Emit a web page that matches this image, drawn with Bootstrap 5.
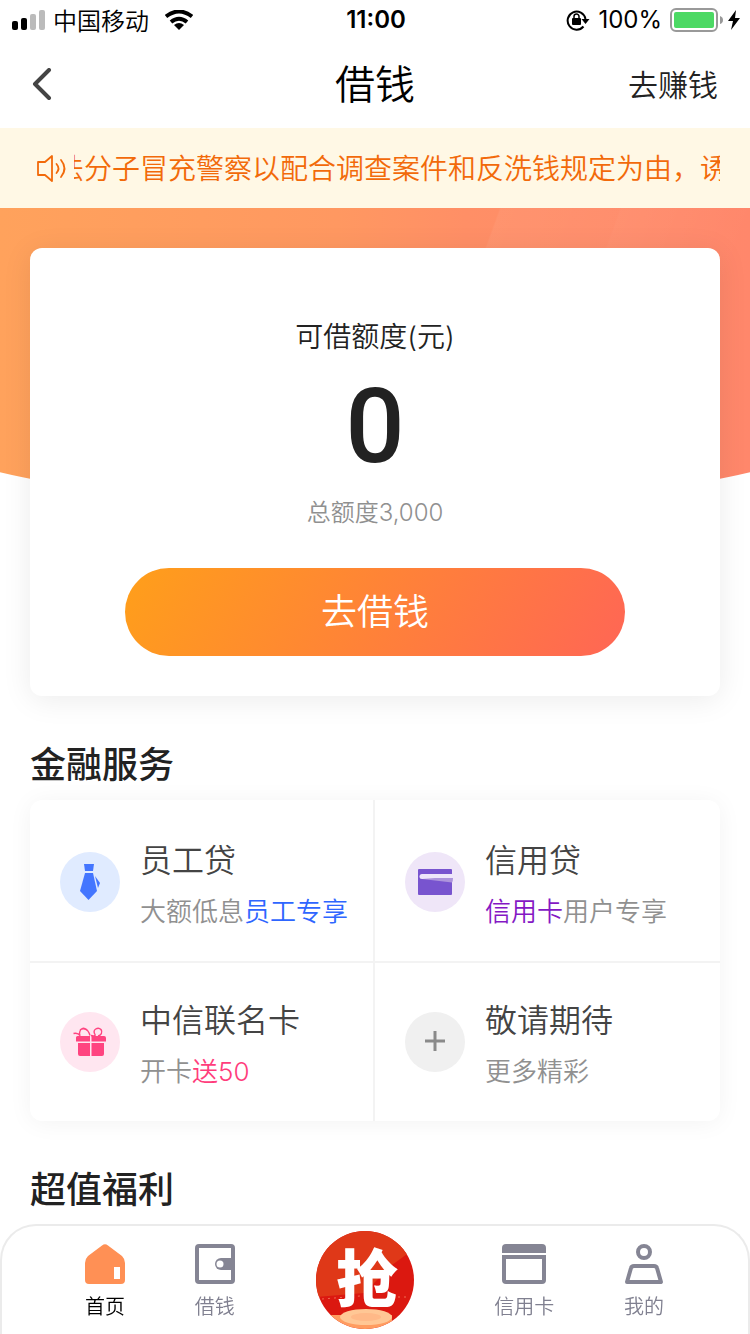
<!DOCTYPE html>
<html lang="zh-CN">
<head>
<meta charset="utf-8">
<meta name="viewport" content="width=device-width, initial-scale=1">
<title>借钱</title>
<link href="https://cdn.jsdelivr.net/npm/bootstrap@5.3.0/dist/css/bootstrap.min.css" rel="stylesheet">
<style>
  body { font-family: Inter, "Noto Sans CJK SC", sans-serif; font-weight: 350; color: #222; background: #fff; }
  a { color: inherit; text-decoration: none; }
  svg { display: block; flex: none; }
  .side { flex: 1 1 0; }
  .status-bar { height: 40px; padding: 0 10px 0 12px; font-size: 24px; line-height: 40px; color: #000; }
  .clock { font-weight: 600; }
  .app-bar { height: 88px; padding: 2px 32px 0; }
  .app-title { font-size: 40px; line-height: 48px; font-weight: 350; color: #000; }
  .app-link { font-size: 30px; line-height: 40px; }
  .notice { height: 80px; padding: 2px 30px 0 36px; background: #fff8e5; color: #f26a0a; }
  .ticker { font-size: 28px; line-height: 40px; text-indent: -18px; }
  .page { padding: 0 30px 112px; }
  .hero { padding-top: 40px; }
  .hero::before {
    content: ""; position: absolute; z-index: -1; top: 0; left: -30px; right: -30px; height: 305px;
    clip-path: ellipse(100% 100% at 50% 0);
    background:
      linear-gradient(110deg, transparent 58%, rgba(255,255,255,.05) 58.2%, rgba(255,255,255,.03) 72%, rgba(255,255,255,.05) 72.2%, transparent 88%),
      linear-gradient(90deg, #ffa25c, #ff9861 45%, #ff8f66 62%, #ff876b);
  }
  .panel { background: #fff; border-radius: 12px; box-shadow: 0 4px 30px rgba(0,0,0,.08); }
  .quota { padding: 69px 30px 40px; }
  .quota-label { font-size: 28px; line-height: 40px; }
  .quota-value { font-family: Roboto, sans-serif; font-size: 104px; line-height: 100px; font-weight: 500; margin: 20px 0; }
  .quota-total { font-size: 24px; line-height: 32px; color: #909090; margin-bottom: 39px; }
  .borrow { max-width: 500px; height: 88px; font-size: 36px; font-weight: 350; color: #fff; border: 0; background: linear-gradient(120deg, #ff9f1a, #ff6655); }
  .section-title { font-size: 36px; line-height: 48px; font-weight: 500; margin: 45px 0 11px; }
  .services { box-shadow: 0 2px 24px rgba(0,0,0,.05); }
  .service { padding: 29px 0 29px 30px; gap: 20px; }
  .service:nth-child(-n+2) { padding-top: 32px; }
  .service:nth-child(odd) { border-right: 2px solid #f3f3f3; }
  .service:nth-child(n+3) { border-top: 2px solid #f3f3f3; }
  .service-text { padding-top: 5px; }
  .service-name { font-size: 32px; line-height: 48px; color: #444; margin-bottom: 7px; }
  .service-note { font-size: 26px; line-height: 40px; color: #909090; }
  .c-blue { color: #2e66ff; } .c-purple { color: #8418c4; } .c-pink { color: #ff3d7c; }
  .tab-bar { height: 110px; padding: 0 84px 0 83px; background: #fff; border: 2px solid #ebebeb; border-bottom: 0; border-radius: 36px 36px 0 0; }
  .tab { padding-top: 18px; gap: 9px; font-size: 20px; line-height: 28px; color: #808090; }
  .tab.active { color: #000; }
  .tab-grab { margin: 5px 11px 0; }
  .grab-word { font: 900 62px "Noto Sans CJK SC", sans-serif; }
</style>
</head>
<body>
<div class="status-bar d-flex align-items-center">
  <div class="side d-flex align-items-center">
    <svg width="33" height="22" viewBox="0 0 33 22"><rect y="12" width="6" height="9" rx="2"/><rect x="9" y="9" width="6" height="12" rx="2"/><g fill="#bbb"><rect x="18" y="5" width="6" height="16" rx="2"/><rect x="27" y="1" width="6" height="20" rx="2"/></g></svg>
    <span class="ms-2 pt-1">中国移动</span>
    <svg class="ms-3" width="28" height="20" viewBox="0 0 28 20"><g fill="none" stroke="#000" stroke-width="4"><path d="M1 6.500Q14-3.500 27 6.500"/><path d="M6 12Q14 5.500 22 12"/></g><path d="M9 15q5-4 10 0l-5 5z"/></svg>
  </div>
  <div class="clock">11:00</div>
  <div class="side d-flex align-items-center justify-content-end">
    <svg width="24" height="22" viewBox="0 0 24 22"><path d="M17.500 17.500A9 9 0 1 1 19.500 10" fill="none" stroke="#000" stroke-width="2"/><path d="M15.500 10h8l-4 5z"/><rect x="6" y="9" width="9" height="7" rx="1"/><path d="M8 9V7.500a2.500 2.500 0 0 1 5 0V9" fill="none" stroke="#000" stroke-width="1.500"/></svg>
    <span class="ms-2 fw-normal">100%</span>
    <svg class="ms-2" width="54" height="24" viewBox="0 0 54 24"><rect x="1" y="1" width="46" height="22" rx="5" fill="#fff" stroke="#999" stroke-width="2"/><rect x="4" y="4" width="40" height="16" rx="2" fill="#4cd964"/><path d="M50 8q3 1 3 4t-3 4z" fill="#999"/></svg>
    <svg class="ms-1" width="12" height="22" viewBox="0 0 12 22"><path d="M8 1 0 12h5L3 21l9-12H7z"/></svg>
  </div>
</div>
<header class="app-bar d-flex align-items-center">
  <div class="side"><a href="#" aria-label="返回"><svg width="22" height="34" viewBox="0 0 22 34"><path d="M17 2 3 16l14 14" fill="none" stroke="#444" stroke-width="4" stroke-linecap="round" stroke-linejoin="round"/></svg></a></div>
  <h1 class="app-title m-0">借钱</h1>
  <div class="side text-end"><a class="app-link" href="#">去赚钱</a></div>
</header>
<div class="notice d-flex align-items-center">
  <svg width="38" height="28" viewBox="0 0 38 28"><g fill="none" stroke="#f26a0a" stroke-width="1.800" stroke-linejoin="round" stroke-linecap="round"><path d="M2 7h7l7-6v25l-7-6H2z"/><path d="M20.500 9q4 4.500 0 9M25 5q7 8.500 0 17"/></g></svg>
  <div class="ticker flex-grow-1 overflow-hidden text-nowrap">法分子冒充警察以配合调查案件和反洗钱规定为由，诱</div>
</div>
<main class="page">
  <section class="hero position-relative z-0">
    <div class="panel quota d-flex flex-column align-items-center">
      <div class="quota-label">可借额度(元)</div>
      <div class="quota-value">0</div>
      <div class="quota-total">总额度3,000</div>
      <button type="button" class="borrow btn rounded-pill w-100 p-0">去借钱</button>
    </div>
  </section>
  <h2 class="section-title">金融服务</h2>
  <div class="panel services row row-cols-2 g-0">
    <a class="service col d-flex align-items-center" href="#">
      <svg width="60" height="60" viewBox="0 0 60 60"><circle cx="30" cy="30" r="30" fill="#e0ebff"/><g fill="#4476ff"><path d="M24 12h10l-1 7h-8z"/><path d="M25 21h8l4 18-8.500 9L20 39z"/><path d="M35 24l5 7-2 5z"/></g></svg>
      <div class="service-text"><div class="service-name">员工贷</div><div class="service-note">大额低息<span class="c-blue">员工专享</span></div></div>
    </a>
    <a class="service col d-flex align-items-center" href="#">
      <svg width="60" height="60" viewBox="0 0 60 60"><circle cx="30" cy="30" r="30" fill="#efe6f8"/><rect x="13" y="17" width="34" height="26" rx="1" fill="#7854cf"/><path d="M17 22h31v5H17a2.500 2.500 0 0 1 0-5z" fill="#eee6fa"/><path d="M17 27l30 3.500q1-1 1-4.500H30z" fill="#ad94dc"/></svg>
      <div class="service-text"><div class="service-name">信用贷</div><div class="service-note"><span class="c-purple">信用卡</span>用户专享</div></div>
    </a>
    <a class="service col d-flex align-items-center" href="#">
      <svg width="60" height="60" viewBox="0 0 60 60"><circle cx="30" cy="30" r="30" fill="#ffe6f0"/><g fill="#ff4480"><path d="M17.500 24H30v5.500H16V25.500q0-1.500 1.500-1.500zM31.500 24H44q2 0 2 2v3.500H31.500zM18 31h12v13H20q-2 0-2-2zM31.500 31H44v11q0 2-2 2H31.500z"/></g><path d="M30 23.500C28 16 22 14 20 19q-1 2 0 5M28 19q-4-4-8-1M20 23.500q-2-3-6.500-2M31 23.500q5 1 4-1c-3-5 3-8 6-5 2 3 0 6-3 6.500" fill="none" stroke="#ff4480" stroke-width="1.400"/></svg>
      <div class="service-text"><div class="service-name">中信联名卡</div><div class="service-note">开卡<span class="c-pink">送50</span></div></div>
    </a>
    <a class="service col d-flex align-items-center" href="#">
      <svg width="60" height="60" viewBox="0 0 60 60"><circle cx="30" cy="30" r="30" fill="#f0f0f0"/><path d="M20 29h20M30 19v20" stroke="#8a8a8a" stroke-width="3"/></svg>
      <div class="service-text"><div class="service-name">敬请期待</div><div class="service-note">更多精彩</div></div>
    </a>
  </div>
  <h2 class="section-title mb-0">超值福利</h2>
</main>
<nav class="tab-bar fixed-bottom d-flex align-items-start justify-content-between">
  <a class="tab active d-flex flex-column align-items-center" href="#" aria-current="page">
    <svg width="40" height="40" viewBox="0 0 40 40"><path d="M17 1.500q3-2.500 6 0L37 12q3 3 3 7v17q0 4-4 4H4q-4 0-4-4V19q0-4 3-7z" fill="#ff9055"/><rect x="29" y="23" width="6" height="12" fill="#fff"/></svg>首页
  </a>
  <a class="tab d-flex flex-column align-items-center" href="#">
    <svg width="40" height="40" viewBox="0 0 40 40"><rect x="2" y="2" width="36" height="36" rx="2" fill="none" stroke="#858594" stroke-width="4"/><path d="M38 14v12H26a6 6 0 0 1 0-12z" fill="#858594"/><circle cx="25" cy="20" r="3.500" fill="#fff"/></svg>借钱
  </a>
  <a class="tab-grab" href="#">
    <svg width="98" height="98" viewBox="0 0 98 98"><defs><clipPath id="disc"><circle cx="49" cy="49" r="49"/></clipPath></defs><g clip-path="url(#disc)"><path d="M0 0h98v98H0z" fill="#db1810"/><path d="M0 0h98v18L76 34 48 62 0 66z" fill="#df3818"/><path d="M6 68l38-3M82 66h12" stroke="#f06a50" stroke-dasharray="2 4"/><path d="M14 84h62v14H14z" fill="#ff9c60"/><ellipse cx="50" cy="86" rx="26" ry="8" fill="#ffc795"/><ellipse cx="50" cy="86" rx="15" ry="4" fill="#ffb988"/></g><text class="grab-word" x="51" y="71" text-anchor="middle" fill="#fff">抢</text></svg>
  </a>
  <a class="tab d-flex flex-column align-items-center" href="#">
    <svg width="44" height="40" viewBox="0 0 44 40"><path d="M4 0h36q4 0 4 4v5H0V4q0-4 4-4z" fill="#858594"/><path d="M2 13h40v23q0 2-2 2H4q-2 0-2-2z" fill="none" stroke="#858594" stroke-width="4"/></svg>信用卡
  </a>
  <a class="tab d-flex flex-column align-items-center" href="#">
    <svg width="40" height="40" viewBox="0 0 40 40"><g fill="none" stroke="#858594" stroke-width="4" stroke-linejoin="round"><circle cx="20" cy="8" r="6"/><path d="M3 38 7 24q.5-2 3-2h20q2.500 0 3 2l4 14z"/></g></svg>我的
  </a>
</nav>
<script src="https://cdn.jsdelivr.net/npm/bootstrap@5.3.0/dist/js/bootstrap.bundle.min.js"></script>
</body>
</html>
